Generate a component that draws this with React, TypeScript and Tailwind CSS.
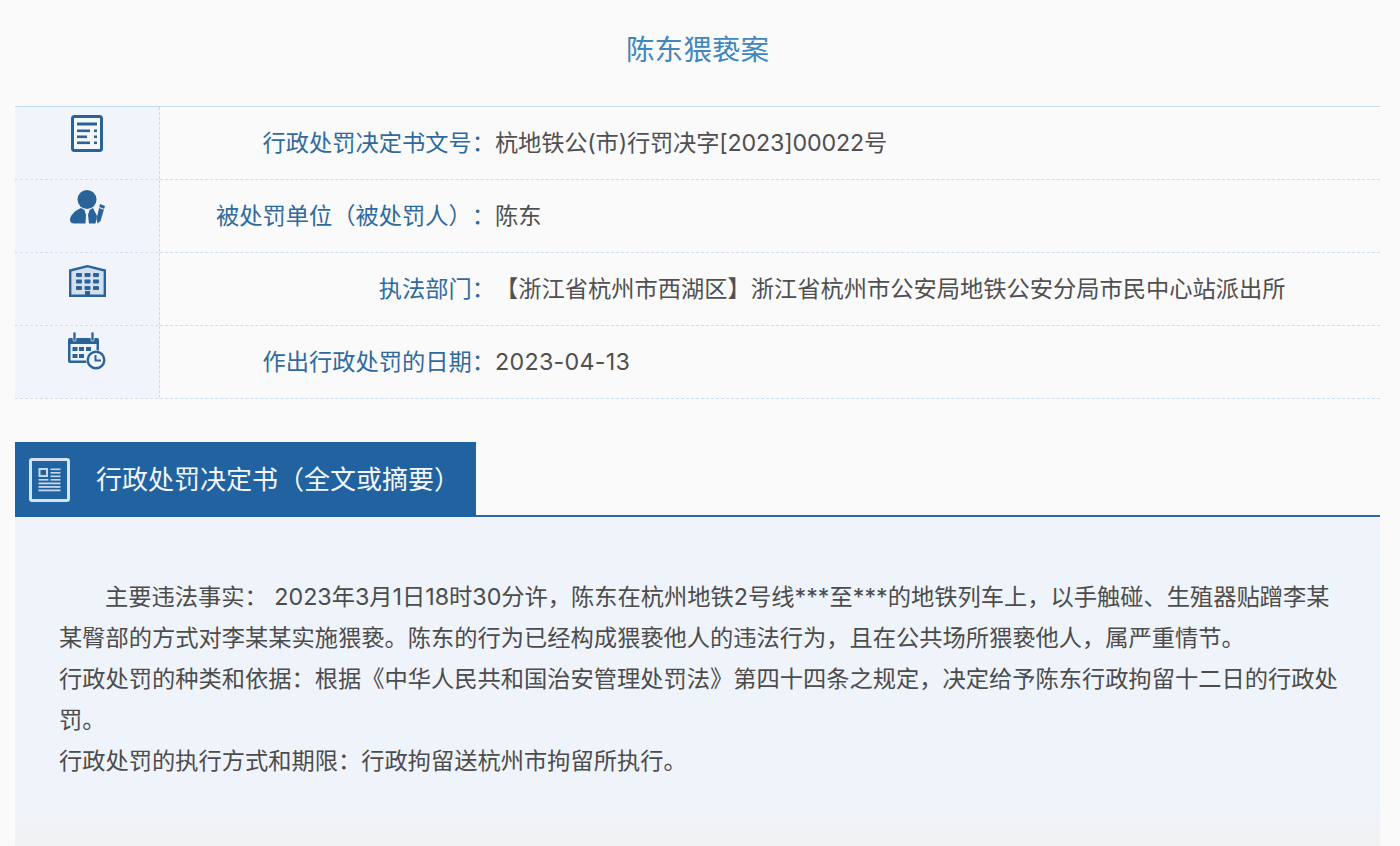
const FONT = "font-['Inter','Noto_Sans_CJK_SC',sans-serif]";
const BLUE = "#2a6399";

const DocIcon = () => (
  <svg width="32" height="37" viewBox="0 0 32 37" fill="none">
    <rect x="1.5" y="1.5" width="29" height="34" rx="2" fill="#fff" fillOpacity="0.3" stroke={BLUE} strokeWidth="3" />
    <rect x="6" y="7.5" width="20" height="3" fill={BLUE} />
    <rect x="6" y="14.5" width="13" height="2.6" fill={BLUE} />
    <rect x="6" y="20.5" width="10" height="2.6" fill={BLUE} />
    <rect x="6" y="26.5" width="13" height="2.6" fill={BLUE} />
    <rect x="23" y="14.5" width="3" height="2.6" fill={BLUE} />
    <rect x="23" y="20.5" width="3" height="2.6" fill={BLUE} />
    <rect x="23" y="26.5" width="3" height="2.6" fill={BLUE} />
  </svg>
);

const PersonIcon = () => (
  <svg width="36" height="34" viewBox="0 0 36 34">
    <circle cx="18" cy="9.5" r="9.5" fill={BLUE} />
    <path d="M12 18 C5 21 1 26 1 30 C1 33 4 33.5 7 33.5 H16.5 L17 25 L15.5 20 Z" fill={BLUE} />
    <path d="M24 18 L20.5 20 L19 25 L20 33.5 H26.5 L28 26 Z" fill={BLUE} />
    <path d="M31 14 L36 16 L31.5 31 L28.5 33.5 L27.5 29 Z" fill={BLUE} />
    <path d="M30.2 17.5 L34.8 19.3" stroke="#f1f4fa" strokeWidth="1.1" />
  </svg>
);

const BuildingIcon = () => (
  <svg width="37" height="32" viewBox="0 0 37 32">
    <path d="M1.2 30.8 V5.5 L18.5 1.2 L35.8 5.5 V30.8 Z" fill="#d3dfec" stroke={BLUE} strokeWidth="2.4" />
    {[8, 14.5, 21].map((y) =>
      [7, 15.5, 24].map((x) => <rect key={`${x}-${y}`} x={x} y={y} width="6" height="4" rx="1" fill={BLUE} />)
    )}
    <rect x="16" y="26" width="5" height="6" fill={BLUE} />
  </svg>
);

const CalendarIcon = () => (
  <svg width="38" height="38" viewBox="0 0 38 38">
    <path d="M2 6 H29 a2 2 0 0 1 2 2 V31 H2 a2 2 0 0 1 -2 -2 V8 a2 2 0 0 1 2 -2 Z" fill={BLUE} />
    <rect x="5" y="0" width="3" height="9" rx="1" fill={BLUE} stroke="#f1f4fa" strokeWidth="0.7" />
    <rect x="23" y="0" width="3" height="9" rx="1" fill={BLUE} stroke="#f1f4fa" strokeWidth="0.7" />
    <rect x="2.5" y="12" width="26" height="16.5" fill="#eef2f9" />
    {[4.5, 11, 18].map((x) => <rect key={x} x={x} y="15" width="5" height="4" fill={BLUE} />)}
    {[4.5, 11].map((x) => <rect key={x} x={x} y="22" width="5" height="4" fill={BLUE} />)}
    <circle cx="28" cy="28" r="10" fill="#f1f4fa" />
    <circle cx="28" cy="28" r="8.3" fill="#f1f4fa" stroke={BLUE} strokeWidth="2.4" />
    <path d="M27.5 23 V28.5 H33" fill="none" stroke={BLUE} strokeWidth="2" />
  </svg>
);

const NewsIcon = () => (
  <svg width="41" height="44" viewBox="0 0 41 44" fill="none">
    <rect x="1.5" y="1.5" width="38" height="41" rx="1.5" stroke="#d5e2ef" strokeWidth="3" />
    <rect x="10.5" y="11" width="7.5" height="7" stroke="#c6d8ea" strokeWidth="2" />
    <rect x="9.5" y="21" width="10" height="1.6" fill="#c6d8ea" />
    {[10.5, 14, 17.5, 21].map((y) => <rect key={y} x="21.5" y={y} width="10" height="1.6" fill="#c6d8ea" />)}
    {[24.5, 28, 31.5].map((y) => <rect key={y} x="9.5" y={y} width="22" height="1.8" fill="#c6d8ea" />)}
  </svg>
);

const rows = [
  { icon: <DocIcon />, pt: "pt-2", label: "行政处罚决定书文号：", value: "杭地铁公(市)行罚决字[2023]00022号", cls: "tracking-[-0.18px]" },
  { icon: <PersonIcon />, pt: "pt-2.5", label: "被处罚单位（被处罚人）：", value: "陈东", cls: "" },
  { icon: <BuildingIcon />, pt: "pt-3", label: "执法部门：", value: "【浙江省杭州市西湖区】浙江省杭州市公安局地铁公安分局市民中心站派出所", cls: "" },
  { icon: <CalendarIcon />, pt: "pt-1.5", label: "作出行政处罚的日期：", value: "2023-04-13", cls: "tracking-[0.3px]" },
];

export default function App() {
  return (
    <div className={`h-[846px] overflow-hidden bg-[#fafafb] pr-[20px] pl-[15px] ${FONT} text-[23.25px] [text-spacing-trim:space-all]`}>
      <h1 className="h-[106px] pt-[28px] text-center text-[28.6px] leading-[44px] font-normal text-[#3f87bd]">陈东猥亵案</h1>

      <div className="border-t border-[#c5dbef]">
        {rows.map((r) => (
          <div key={r.label} className="flex h-[73px] border-b border-dashed border-[#cfdcef]">
            <div className={`flex w-[145px] shrink-0 justify-center border-r border-dashed border-[#cfd9ec] bg-[#f1f4fa] ${r.pt}`}>
              {r.icon}
            </div>
            <div className="flex flex-1 items-center">
              <div className="w-[335px] shrink-0 text-right whitespace-nowrap text-[#2f6a9e]">{r.label}</div>
              <div className={`whitespace-nowrap text-[#505050] ${r.cls}`}>{r.value}</div>
            </div>
          </div>
        ))}
      </div>

      <div className="mt-[43px] flex h-[75px] border-b-2 border-[#2a68a2]">
        <div className="flex h-[75px] w-[461px] items-center bg-[#2163a0] pl-[14px]">
          <NewsIcon />
          <span className="ml-[26px] text-[26px] text-[#f4f7fb]">行政处罚决定书（全文或摘要）</span>
        </div>
      </div>

      <div className="h-[329px] bg-gradient-to-b from-[#f0f3fa] via-[#eff3fa] via-[88%] to-[#f1f1f3] pt-[59px] pr-[40px] pl-[44px] leading-[41px] text-[#4c4c4c]">
        <p className="indent-[46px]">主要违法事实： 2023年3月1日18时30分许，陈东在杭州地铁2号线***至***的地铁列车上，以手触碰、生殖器贴蹭李某某臀部的方式对李某某实施猥亵。陈东的行为已经构成猥亵他人的违法行为，且在公共场所猥亵他人，属严重情节。</p>
        <p>行政处罚的种类和依据：根据《中华人民共和国治安管理处罚法》第四十四条之规定，决定给予陈东行政拘留十二日的行政处罚。</p>
        <p>行政处罚的执行方式和期限：行政拘留送杭州市拘留所执行。</p>
      </div>
    </div>
  );
}
